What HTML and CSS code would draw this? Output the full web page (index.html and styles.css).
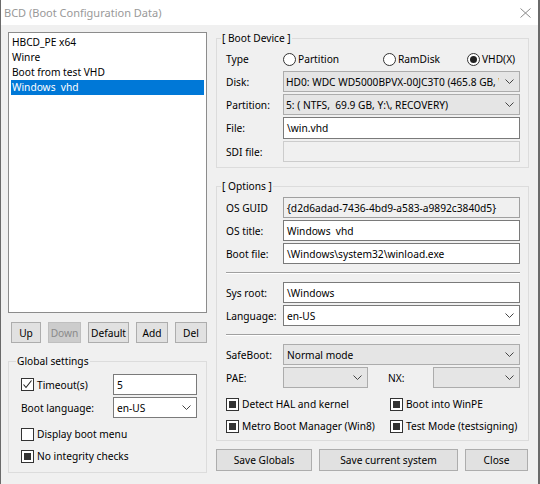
FILE: index.html
```html
<!DOCTYPE html>
<html>
<head>
<meta charset="utf-8">
<link rel="stylesheet" href="styles.css">
</head>
<body>
<div class="window">
  <div class="titlebar">
    <span class="title">BCD (Boot Configuration Data)</span>
    <svg class="close" width="11" height="10" viewBox="0 0 11 10"><path d="M0.5 0.5 L10.5 9.5 M10.5 0.5 L0.5 9.5" stroke="#8a8a8a" stroke-width="1" fill="none"/></svg>
  </div>
  <div class="main">
    <div class="left">
      <div class="listbox">
        <div class="item">HBCD_PE x64</div>
        <div class="item">Winre</div>
        <div class="item">Boot from test VHD</div>
        <div class="item sel">Windows&nbsp; vhd</div>
      </div>
      <div class="btnrow">
        <div class="btn w-up">Up</div>
        <div class="btn w-down disabled">Down</div>
        <div class="btn w-default">Default</div>
        <div class="btn w-add">Add</div>
        <div class="btn w-del">Del</div>
      </div>
      <fieldset class="group global">
        <legend>Global settings</legend>
        <div class="gl-grid">
          <div class="chk"><span class="box checked"><svg width="11" height="11" viewBox="0 0 11 11"><path d="M1.5 5.5 L4 8.5 L9.5 1.5" stroke="#222" stroke-width="1.1" fill="none"/></svg></span><span>Timeout(s)</span></div>
          <div class="field input">5</div>
          <div class="lbl">Boot language:</div>
          <div class="field combo white"><span class="val">en-US</span><svg class="chev" width="9" height="5" viewBox="0 0 9 5"><path d="M0.5 0.5 L4.5 4.5 L8.5 0.5" stroke="#444" fill="none"/></svg></div>
        </div>
        <div class="chk gl-c1"><span class="box"></span><span>Display boot menu</span></div>
        <div class="chk gl-c2"><span class="box ind"></span><span>No integrity checks</span></div>
      </fieldset>
    </div>
    <div class="right">
      <fieldset class="group device">
        <legend>[ Boot Device ]</legend>
        <div class="form dev-grid">
          <div class="lbl">Type</div>
          <div class="radios">
            <div class="rad"><span class="radio"></span><span>Partition</span></div>
            <div class="rad"><span class="radio"></span><span>RamDisk</span></div>
            <div class="rad"><span class="radio on"></span><span>VHD(X)</span></div>
          </div>
          <div class="lbl">Disk:</div>
          <div class="field combo grey tight"><span class="val">HD0: WDC WD5000BPVX-00JC3T0 (465.8 GB, WDC)</span><svg class="chev" width="9" height="5" viewBox="0 0 9 5"><path d="M0.5 0.5 L4.5 4.5 L8.5 0.5" stroke="#444" fill="none"/></svg></div>
          <div class="lbl">Partition:</div>
          <div class="field combo grey tight"><span class="val">5: ( NTFS,&nbsp; 69.9 GB, Y:\, RECOVERY)</span><svg class="chev" width="9" height="5" viewBox="0 0 9 5"><path d="M0.5 0.5 L4.5 4.5 L8.5 0.5" stroke="#444" fill="none"/></svg></div>
          <div class="lbl">File:</div>
          <div class="field input">\win.vhd</div>
          <div class="lbl">SDI file:</div>
          <div class="field input disabled-in"></div>
        </div>
      </fieldset>
      <fieldset class="group options">
        <legend>[ Options ]</legend>
        <div class="form opt-grid">
          <div class="lbl">OS GUID</div>
          <div class="field input readonly">{d2d6adad-7436-4bd9-a583-a9892c3840d5}</div>
          <div class="lbl">OS title:</div>
          <div class="field input">Windows&nbsp; vhd</div>
          <div class="lbl">Boot file:</div>
          <div class="field input">\Windows\system32\winload.exe</div>
          <div class="sep"></div>
          <div class="lbl">Sys root:</div>
          <div class="field input">\Windows</div>
          <div class="lbl">Language:</div>
          <div class="field combo white"><span class="val">en-US</span><svg class="chev" width="9" height="5" viewBox="0 0 9 5"><path d="M0.5 0.5 L4.5 4.5 L8.5 0.5" stroke="#444" fill="none"/></svg></div>
          <div class="sep"></div>
          <div class="lbl">SafeBoot:</div>
          <div class="field combo grey"><span class="val">Normal mode</span><svg class="chev" width="9" height="5" viewBox="0 0 9 5"><path d="M0.5 0.5 L4.5 4.5 L8.5 0.5" stroke="#444" fill="none"/></svg></div>
          <div class="lbl">PAE:</div>
          <div class="paerow">
            <div class="field combo grey pae"><span class="val"></span><svg class="chev" width="9" height="5" viewBox="0 0 9 5"><path d="M0.5 0.5 L4.5 4.5 L8.5 0.5" stroke="#444" fill="none"/></svg></div>
            <div class="lbl nx">NX:</div>
            <div class="field combo grey nxsel"><span class="val"></span><svg class="chev" width="9" height="5" viewBox="0 0 9 5"><path d="M0.5 0.5 L4.5 4.5 L8.5 0.5" stroke="#444" fill="none"/></svg></div>
          </div>
          <div class="checks c1">
            <div class="chk"><span class="box ind"></span><span>Detect HAL and kernel</span></div>
            <div class="chk"><span class="box ind"></span><span>Boot into WinPE</span></div>
          </div>
          <div class="checks c2">
            <div class="chk"><span class="box ind"></span><span>Metro Boot Manager (Win8)</span></div>
            <div class="chk"><span class="box ind"></span><span>Test Mode (testsigning)</span></div>
          </div>
        </div>
      </fieldset>
      <div class="actions">
        <div class="btn w-saveg">Save Globals</div>
        <div class="btn w-savec">Save current system</div>
        <div class="btn w-close">Close</div>
      </div>
    </div>
  </div>
</div>
</body>
</html>
```
FILE: styles.css
```css
* { box-sizing: border-box; }
html, body { margin: 0; padding: 0; }
body {
  width: 540px;
  height: 484px;
  overflow: hidden;
  background: #f0f0f0;
  font-family: "Noto Sans", "DejaVu Sans", sans-serif;
  font-size: 10.2px;
  color: #000;
}
.window {
  width: 540px;
  height: 484px;
  background: #f0f0f0;
  border-left: 1px solid #6a6a6a;
  border-right: 2px solid #6a6a6a;
}
.titlebar {
  height: 25px;
  background: #fff;
  display: flex;
  align-items: center;
  justify-content: space-between;
  padding: 0 7px 0 3px;
}
.title { color: #999; font-size: 11px; }
.close { display: block; }

.main {
  display: flex;
  gap: 9px;
  padding: 6px 0 0 7px;
}
.left { width: 199px; }
.right { width: 313px; }

.listbox {
  margin-top: 1px;
  height: 281px;
  background: #fff;
  border: 1px solid #8c8c8c;
  padding: 2px 2px;
}
.item {
  height: 15px;
  line-height: 15px;
  padding-left: 1px;
  white-space: nowrap;
}
.item.sel { background: #0078d7; color: #fff; }

.btn {
  height: 21px;
  background: #e1e1e1;
  border: 1px solid #adadad;
  display: flex;
  align-items: center;
  justify-content: center;
  white-space: nowrap;
}
.btn.disabled { background: #cccccc; border-color: #bfbfbf; color: #8a8a8a; }
.btnrow { display: flex; gap: 7px; padding-left: 3px; margin-top: 9px; }
.w-up { width: 30px; }
.w-down { width: 33px; }
.w-default { width: 41px; }
.w-add { width: 32px; }
.w-del { width: 32px; }

fieldset.group {
  margin: 0;
  min-width: 0;
  border: 1px solid #dcdcdc;
}
fieldset.group legend {
  font-size: 10.2px;
  line-height: 14px;
  padding: 0 1px;
  margin-left: -5px;
}
fieldset.global { margin-top: 11px; padding: 6px 9px 7px 12px; }
.gl-grid {
  display: grid;
  grid-template-columns: 92px 84px;
  row-gap: 2px;
  align-items: center;
}
.gl-c1 { margin-top: 7px; height: 18px; }
.gl-c2 { margin-top: 4px; height: 18px; }

.field {
  height: 21px;
  display: flex;
  align-items: center;
  padding-left: 3px;
  white-space: nowrap;
  overflow: hidden;
}
.input { background: #fff; border: 1px solid #7a7a7a; }
.input.readonly { background: #f0f0f0; border-color: #a0a0a0; }
.input.disabled-in { background: #f0f0f0; border-color: #cccccc; }
.combo { justify-content: space-between; padding-right: 5px; }
.combo.grey { background: #e5e5e5; border: 1px solid #acacac; }
.combo.white { background: #fff; border: 1px solid #7a7a7a; }
.combo.tight { padding-left: 2px; }
.combo .val { overflow: hidden; white-space: nowrap; flex: 1; min-width: 0; margin-right: 6px; }
.chev { flex: none; display: block; }

.chk { display: flex; align-items: center; gap: 3px; white-space: nowrap; }
.box {
  width: 13px;
  height: 13px;
  border: 1px solid #333;
  background: #fff;
  flex: none;
  display: flex;
  align-items: center;
  justify-content: center;
}
.box.ind::after {
  content: "";
  width: 7px;
  height: 7px;
  background: #333;
}
.box svg { display: block; }

fieldset.device { padding: 4px 8px 5px 9px; }
fieldset.options { margin-top: 11px; padding: 4px 8px 5px 9px; }
.form {
  display: grid;
  grid-template-columns: 57px 237px;
  row-gap: 2px;
  align-items: center;
}
.dev-grid { grid-template-rows: 20px 21px 21px 22px 21px; }
.dev-grid .field { height: 100%; }
.radios { display: grid; grid-template-columns: 100px 84px auto; align-items: center; }
.rad { display: flex; align-items: center; gap: 2px; white-space: nowrap; }
.radio {
  width: 13px;
  height: 13px;
  border: 1px solid #333;
  border-radius: 50%;
  background: #fff;
  display: flex;
  align-items: center;
  justify-content: center;
}
.radio.on::after {
  content: "";
  width: 7px;
  height: 7px;
  border-radius: 50%;
  background: #222;
}
.sep {
  grid-column: 1 / 3;
  height: 2px;
  margin: 6px 0;
  border-top: 1px solid #a0a0a0;
  border-bottom: 1px solid #fff;
}
.paerow { display: flex; align-items: center; }
.pae { width: 85px; }
.nx { width: 45px; margin-left: 20px; }
.nxsel { flex: 1; }
.checks {
  grid-column: 1 / 3;
  display: grid;
  grid-template-columns: 164px auto;
  height: 18px;
  align-items: center;
}
.checks.c1 { margin-top: 5px; }
.checks.c2 { margin-top: 2px; }

.actions { display: flex; gap: 7px; margin-top: 8px; }
.actions .btn { height: 22px; }
.w-saveg { width: 96px; }
.w-savec { width: 139px; }
.w-close { width: 63px; }
```
